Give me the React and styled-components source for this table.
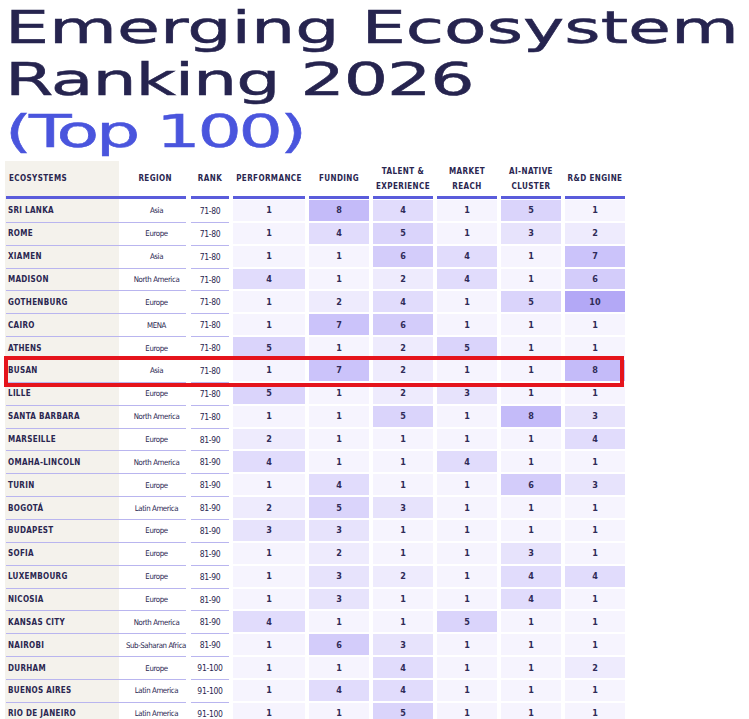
import React from "react";
import styled, { createGlobalStyle, css } from "styled-components";

const GlobalStyle = createGlobalStyle`
  body {
    margin: 0;
    background: #ffffff;
  }
`;

const rows = [
  ["SRI LANKA", "Asia", "71-80", [1, 8, 4, 1, 5, 1]],
  ["ROME", "Europe", "71-80", [1, 4, 5, 1, 3, 2]],
  ["XIAMEN", "Asia", "71-80", [1, 1, 6, 4, 1, 7]],
  ["MADISON", "North America", "71-80", [4, 1, 2, 4, 1, 6]],
  ["GOTHENBURG", "Europe", "71-80", [1, 2, 4, 1, 5, 10]],
  ["CAIRO", "MENA", "71-80", [1, 7, 6, 1, 1, 1]],
  ["ATHENS", "Europe", "71-80", [5, 1, 2, 5, 1, 1]],
  ["BUSAN", "Asia", "71-80", [1, 7, 2, 1, 1, 8]],
  ["LILLE", "Europe", "71-80", [5, 1, 2, 3, 1, 1]],
  ["SANTA BARBARA", "North America", "71-80", [1, 1, 5, 1, 8, 3]],
  ["MARSEILLE", "Europe", "81-90", [2, 1, 1, 1, 1, 4]],
  ["OMAHA-LINCOLN", "North America", "81-90", [4, 1, 1, 4, 1, 1]],
  ["TURIN", "Europe", "81-90", [1, 4, 1, 1, 6, 3]],
  ["BOGOTÁ", "Latin America", "81-90", [2, 5, 3, 1, 1, 1]],
  ["BUDAPEST", "Europe", "81-90", [3, 3, 1, 1, 1, 1]],
  ["SOFIA", "Europe", "81-90", [1, 2, 1, 1, 3, 1]],
  ["LUXEMBOURG", "Europe", "81-90", [1, 3, 2, 1, 4, 4]],
  ["NICOSIA", "Europe", "81-90", [1, 3, 1, 1, 4, 1]],
  ["KANSAS CITY", "North America", "81-90", [4, 1, 1, 5, 1, 1]],
  ["NAIROBI", "Sub-Saharan Africa", "81-90", [1, 6, 3, 1, 1, 1]],
  ["DURHAM", "Europe", "91-100", [1, 1, 4, 1, 1, 2]],
  ["BUENOS AIRES", "Latin America", "91-100", [1, 4, 4, 1, 1, 1]],
  ["RIO DE JANEIRO", "Latin America", "91-100", [1, 1, 5, 1, 1, 1]],
];

const scoreHeads = [
  ["PERFORMANCE"],
  ["FUNDING"],
  ["TALENT &", "EXPERIENCE"],
  ["MARKET", "REACH"],
  ["AI-NATIVE", "CLUSTER"],
  ["R&D ENGINE"],
];

const shades = {
  1: "#f6f4fe",
  2: "#eeebfd",
  3: "#e7e3fc",
  4: "#e1dcfc",
  5: "#dad4fb",
  6: "#d3ccfa",
  7: "#cbc3fa",
  8: "#c4bbf9",
  10: "#b3a8f6",
};

const condensed = `"Liberation Sans Narrow", "DejaVu Sans Condensed", Roboto, sans-serif`;

const Page = styled.div`
  padding: 0 0 0 5px;
  overflow: hidden;
  height: 719px;
`;

const Title = styled.h1`
  margin: 0;
  padding-top: 2px;
  font-family: "DejaVu Sans", "Noto Sans", sans-serif;
  font-weight: 400;
  font-size: 44px;
  line-height: 52px;
  color: #26244f;
  -webkit-text-stroke: 0.5px currentColor;
  transform: scaleX(1.585);
  transform-origin: left top;
  white-space: nowrap;
`;

const TitleLine = styled.span`
  display: block;
  letter-spacing: ${(p) => p.$track || 0}px;
  color: ${(p) => (p.$accent ? "#4a55dd" : "inherit")};
`;

const Table = styled.div`
  margin-top: 3px;
  width: 620px;
  background: linear-gradient(to right, #f4f2ec 0 114px, transparent 114px);
`;

const HeadRow = styled.div`
  display: flex;
  height: 38px;
`;

const Row = styled.div`
  display: flex;
  height: 22.86px;
  position: relative;
  ${(p) =>
    p.$highlight &&
    css`
      z-index: 2;
      &::after {
        content: "";
        position: absolute;
        left: -1px;
        top: -4px;
        width: 620px;
        height: 31px;
        border: 4px solid #e5141c;
        box-sizing: border-box;
        pointer-events: none;
      }
    `}
`;

const Body = styled.div`
  padding-top: 1px;
`;

const HeadCell = styled.div`
  box-sizing: border-box;
  width: ${(p) => p.$w}px;
  margin-left: ${(p) => p.$gap || 0}px;
  border-bottom: 3px solid #5a5cdb;
  display: flex;
  flex-direction: column;
  justify-content: center;
  align-items: center;
  font-family: ${condensed};
  font-weight: 700;
  font-size: 8px;
  line-height: 15px;
  letter-spacing: 0.4px;
  color: #2a2650;
  white-space: nowrap;
`;

const NameHead = styled(HeadCell)`
  flex-direction: row;
  justify-content: space-between;
  align-items: center;
  padding: 0 14px 0 3px;
  margin-left: 1px;
`;

const NameCell = styled.div`
  box-sizing: border-box;
  width: 180px;
  margin-left: 1px;
  display: flex;
  align-items: center;
  border-bottom: 1.5px solid #b9b5ef;
  font-family: ${condensed};
  color: #2a2650;
  white-space: nowrap;
`;

const Name = styled.div`
  width: 113px;
  padding-left: 2px;
  font-weight: 700;
  font-size: 8px;
  letter-spacing: 0.3px;
`;

const Region = styled.div`
  flex: 1;
  text-align: center;
  padding-left: 6px;
  font-size: 7.8px;
  letter-spacing: -0.4px;
`;

const RankCell = styled.div`
  box-sizing: border-box;
  width: 38px;
  margin-left: 5px;
  display: flex;
  align-items: center;
  justify-content: center;
  border-bottom: 1.5px solid #b9b5ef;
  font-family: ${condensed};
  font-size: 8.5px;
  letter-spacing: -0.3px;
  color: #2a2650;
`;

const Score = styled.div`
  width: ${(p) => p.$w}px;
  height: 20.86px;
  margin-left: 4px;
  display: flex;
  align-items: center;
  justify-content: center;
  background: ${(p) => shades[p.$level] || shades[1]};
  font-family: ${condensed};
  font-weight: 700;
  font-size: 9px;
  color: #2f2b58;
`;

export default function App() {
  return (
    <Page>
      <GlobalStyle />
      <Title>
        <TitleLine>Emerging Ecosystem</TitleLine>
        <TitleLine $track={-0.7}>Ranking 2026</TitleLine>
        <TitleLine $track={-2} $accent>
          (Top 100)
        </TitleLine>
      </Title>
      <Table>
        <HeadRow>
          <NameHead $w={180}>
            <span>ECOSYSTEMS</span>
            <span>REGION</span>
          </NameHead>
          <HeadCell $w={38} $gap={5}>
            RANK
          </HeadCell>
          {scoreHeads.map((lines, i) => (
            <HeadCell key={i} $w={i === 0 ? 72 : 60} $gap={4}>
              {lines.map((l) => (
                <span key={l}>{l}</span>
              ))}
            </HeadCell>
          ))}
        </HeadRow>
        <Body>
          {rows.map(([name, region, rank, scores]) => (
            <Row key={name} $highlight={name === "BUSAN"}>
              <NameCell>
                <Name>{name}</Name>
                <Region>{region}</Region>
              </NameCell>
              <RankCell>{rank}</RankCell>
              {scores.map((s, i) => (
                <Score key={i} $w={i === 0 ? 72 : 60} $level={s}>
                  {s}
                </Score>
              ))}
            </Row>
          ))}
        </Body>
      </Table>
    </Page>
  );
}
